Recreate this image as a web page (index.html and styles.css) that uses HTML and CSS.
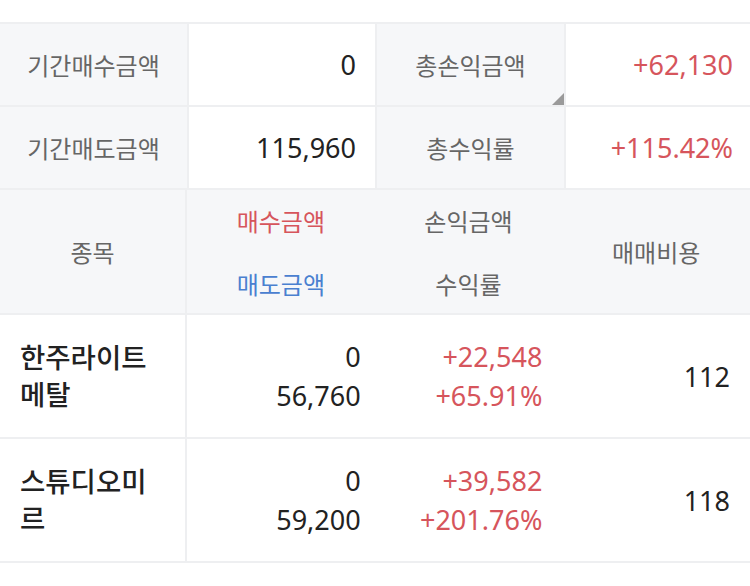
FILE: index.html
```html
<!DOCTYPE html>
<html lang="ko">
<head>
<meta charset="utf-8">
<link rel="stylesheet" href="styles.css">
</head>
<body>
<div class="page">
  <div class="summary">
    <div class="label">기간매수금액</div>
    <div class="value">0</div>
    <div class="label tri">총손익금액</div>
    <div class="value up">+62,130</div>
    <div class="label">기간매도금액</div>
    <div class="value">115,960</div>
    <div class="label">총수익률</div>
    <div class="value up">+115.42%</div>
  </div>
  <div class="table">
    <div class="row head">
      <div class="cell name-h">종목</div>
      <div class="cell stack">
        <span class="buy">매수금액</span>
        <span class="sell">매도금액</span>
      </div>
      <div class="cell stack">
        <span>손익금액</span>
        <span>수익률</span>
      </div>
      <div class="cell center">매매비용</div>
    </div>
    <div class="row data">
      <div class="cell name">한주라이트<br>메탈</div>
      <div class="cell nums"><span>0</span><span>56,760</span></div>
      <div class="cell nums up"><span>+22,548</span><span>+65.91%</span></div>
      <div class="cell fee">112</div>
    </div>
    <div class="row data">
      <div class="cell name">스튜디오미<br>르</div>
      <div class="cell nums"><span>0</span><span>59,200</span></div>
      <div class="cell nums up"><span>+39,582</span><span>+201.76%</span></div>
      <div class="cell fee">118</div>
    </div>
  </div>
</div>
</body>
</html>
```

FILE: styles.css
```css
* { box-sizing: border-box; }
html, body { margin: 0; padding: 0; background: #fff; }
body {
  font-family: "Noto Sans", "Noto Sans CJK KR", sans-serif;
  width: 750px;
  height: 586px;
  overflow: hidden;
}
.page { padding-top: 22px; }

.summary {
  display: grid;
  grid-template-columns: 187px 186px 187px 186px;
  grid-auto-rows: 81px;
  gap: 2px;
  background: #eeeff1;
  border-top: 2px solid #eeeff1;
  border-bottom: 2px solid #eeeff1;
}
.label {
  background: #f6f7f9;
  color: #666;
  font-size: 24px;
  display: flex;
  align-items: center;
  justify-content: center;
  position: relative;
}
.value {
  background: #fff;
  color: #222;
  font-size: 27px;
  display: flex;
  align-items: center;
  justify-content: flex-end;
  padding-right: 19px;
}
.up { color: #d6555c; }
.tri::after {
  content: "";
  position: absolute;
  right: 0;
  bottom: 0;
  width: 0;
  height: 0;
  border-style: solid;
  border-width: 0 0 12px 12px;
  border-color: transparent transparent #9a9a9a transparent;
}

.row {
  display: grid;
  grid-template-columns: 187px 1fr 1fr 1fr;
  border-bottom: 2px solid #eeeff1;
}
.row .cell:first-child { border-right: 2px solid #eeeff1; }
.head { background: #f6f7f9; height: 125px; }
.head .cell {
  color: #666;
  font-size: 24px;
  display: flex;
  align-items: center;
  justify-content: center;
}
.head .stack {
  flex-direction: column;
  gap: 28px;
}
.buy { color: #d6555c; }
.sell { color: #4a80d0; }

.data { height: 124px; background: #fff; }
.data .cell { display: flex; align-items: center; }
.name {
  color: #222;
  font-size: 27.5px;
  font-weight: 500;
  line-height: 37px;
  padding-left: 20px;
}
.nums {
  flex-direction: column;
  justify-content: center;
  align-items: flex-end !important;
  font-size: 27px;
  line-height: 39px;
  color: #222;
  padding-right: 14px;
}
.nums.up { color: #d6555c; padding-right: 20px; }
.fee {
  justify-content: flex-end;
  padding-right: 20px;
  font-size: 27px;
  color: #222;
}
```
